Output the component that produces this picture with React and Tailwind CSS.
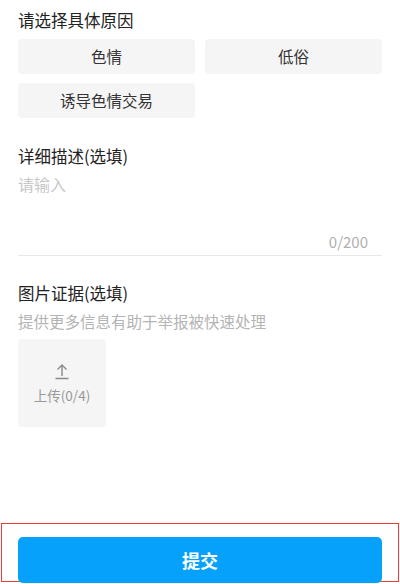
const reasons = ["色情", "低俗", "诱导色情交易"];

const App = () => {
  return (
    <main
      className="relative w-[400px] h-[584px] bg-white overflow-hidden"
      style={{ fontFamily: '"Noto Sans CJK SC", "Noto Sans", sans-serif' }}
    >
      <div className="px-[18px]">
        {/* Reason */}
        <h2 className="pt-[8px] text-[16.5px] leading-[24px] text-[#222]">请选择具体原因</h2>
        <div className="mt-[7px] grid grid-cols-2 gap-x-[10px] gap-y-[9px]">
          {reasons.map((r) => (
            <button
              key={r}
              className="h-[35px] rounded-[4px] bg-[#f5f5f5] text-[15.5px] text-[#333] flex items-center justify-center"
            >
              {r}
            </button>
          ))}
        </div>

        {/* Description */}
        <h2 className="mt-[26px] text-[16.5px] leading-[24px] text-[#222]">详细描述(选填)</h2>
        <div className="mt-[4px] border-b border-[#e8e8e8]">
          <p className="text-[16px] leading-[24px] text-[#c8c8c8]">请输入</p>
          <div className="mt-[36px] pb-[3px] pr-[14px] text-right text-[15px] leading-[20px] text-[#b0b0b0]">
            0/200
          </div>
        </div>

        {/* Evidence */}
        <h2 className="mt-[25px] text-[16.5px] leading-[24px] text-[#222]">图片证据(选填)</h2>
        <p className="mt-[4px] text-[15.5px] leading-[24px] text-[#b4b4b4]">提供更多信息有助于举报被快速处理</p>
        <div className="mt-[6px] w-[88px] h-[88px] rounded-[4px] bg-[#f5f5f5] flex flex-col items-center justify-center">
          <svg width="16" height="18" viewBox="0 0 16 18" fill="none" stroke="#8a8a8a" strokeWidth="1.4">
            <path d="M8 14V3M3.5 7.5L8 3l4.5 4.5M1.5 16.5h13" />
          </svg>
          <span className="mt-[6px] text-[13.5px] leading-[18px] text-[#999]">上传(0/4)</span>
        </div>
      </div>

      {/* Submit */}
      <div className="absolute left-[1px] right-[1px] top-[523px] h-[59px] border-[1.5px] border-[#f23a3a] px-[16px] pt-[13px]">
        <button className="w-full h-[46px] rounded-[5px] bg-[#05a1fb] text-white text-[18px] font-bold">
          提交
        </button>
      </div>
    </main>
  );
};

export default App;
